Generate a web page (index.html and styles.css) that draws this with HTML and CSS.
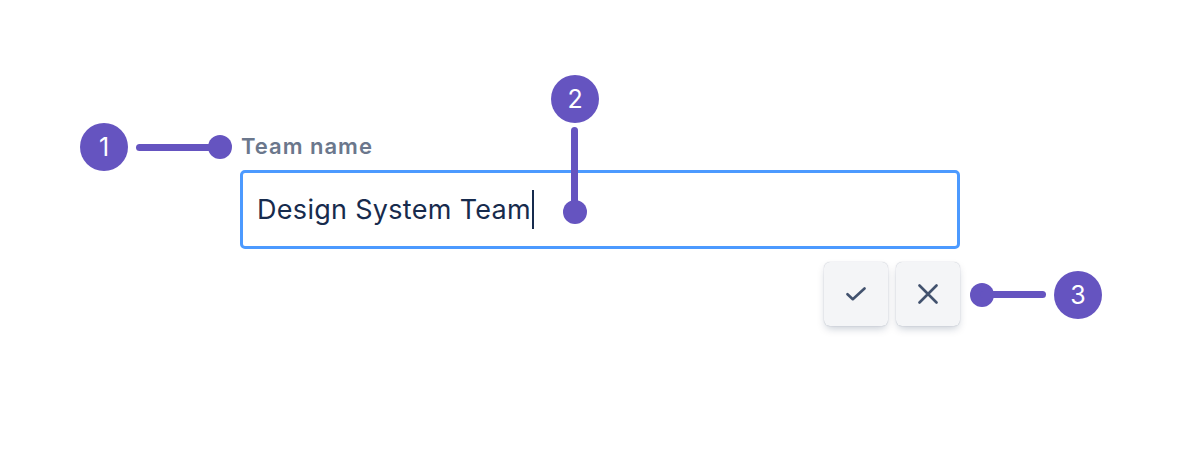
FILE: index.html
```html
<!DOCTYPE html>
<html>
<head>
<meta charset="utf-8">
<link rel="stylesheet" href="styles.css">
</head>
<body>
<div class="stage">
  <div class="field">
    <label class="label">Team name</label>
    <div class="input"><span class="value">Design System Team</span><span class="caret"></span></div>
    <div class="actions">
      <button class="btn" aria-label="Confirm">
        <svg width="20" height="14" viewBox="0 0 20 14"><path d="M1.5 7.2 L6.8 12.2 L18.5 1.5" fill="none" stroke="#42526E" stroke-width="2.6" stroke-linecap="round" stroke-linejoin="round"/></svg>
      </button>
      <button class="btn" aria-label="Cancel">
        <svg width="20" height="20" viewBox="0 0 20 20"><path d="M1.5 1.5 L18.5 18.5 M18.5 1.5 L1.5 18.5" fill="none" stroke="#42526E" stroke-width="2.6" stroke-linecap="round"/></svg>
      </button>
    </div>
  </div>

  <div class="badge b1">1</div>
  <div class="hline l1"></div>
  <div class="dot d1"></div>

  <div class="badge b2">2</div>
  <div class="vline l2"></div>
  <div class="dot d2"></div>

  <div class="dot d3"></div>
  <div class="hline l3"></div>
  <div class="badge b3">3</div>
</div>
</body>
</html>
```

FILE: styles.css
```css
* { box-sizing: border-box; }
html, body { margin: 0; padding: 0; background: #fff; }
body { font-family: Inter, "Noto Sans", "Liberation Sans", sans-serif; }
.stage { position: relative; width: 1200px; height: 456px; }

.field { padding: 132px 0 0 240px; width: 960px; }
.label { display: block; font-size: 22px; line-height: 28px; font-weight: 600; color: #6B778C; padding-left: 1px; margin-bottom: 10px; letter-spacing: 1px; }

.input {
  width: 720px; height: 79px;
  border: 3px solid #4C9AFF; border-radius: 5px;
  display: flex; align-items: center;
  padding-left: 14px;
}
.value { font-size: 27px; color: #172B4D; letter-spacing: 0.3px; }
.caret { width: 2px; height: 39px; background: #172B4D; margin-left: 1px; }

.actions { display: flex; justify-content: flex-end; gap: 8px; margin-top: 13px; }
.btn {
  width: 64px; height: 64px; padding: 0; border: none;
  background: #F4F5F7; border-radius: 6px;
  box-shadow: 0 4px 8px -2px rgba(9,30,66,0.25), 0 0 1px rgba(9,30,66,0.31);
  display: flex; align-items: center; justify-content: center;
}

.badge {
  position: absolute; width: 48px; height: 48px; border-radius: 50%;
  background: #6554C0; color: #fff;
  font-size: 25px; line-height: 48px; text-align: center; font-weight: 400;
}
.dot { position: absolute; width: 24px; height: 24px; border-radius: 50%; background: #6554C0; }
.hline { position: absolute; height: 7px; border-radius: 4px; background: #6554C0; }
.vline { position: absolute; width: 7px; border-radius: 4px; background: #6554C0; }

.b1 { left: 80px; top: 123px; }
.l1 { left: 136px; top: 144px; width: 86px; }
.d1 { left: 208px; top: 135px; }

.b2 { left: 551px; top: 75px; }
.l2 { left: 571px; top: 127px; height: 84px; }
.d2 { left: 563px; top: 200px; }

.d3 { left: 970px; top: 283px; }
.l3 { left: 980px; top: 291px; width: 66px; }
.b3 { left: 1054px; top: 271px; }
```
